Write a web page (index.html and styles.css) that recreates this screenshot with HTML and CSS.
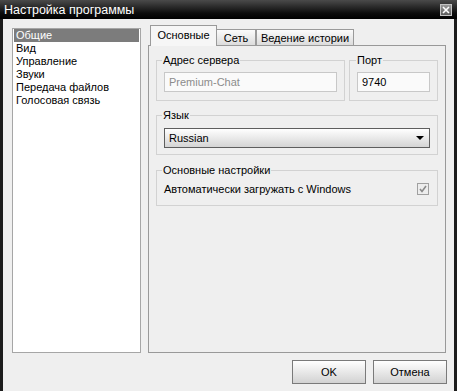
FILE: index.html
```html
<!DOCTYPE html>
<html lang="ru">
<head>
    <meta charset="UTF-8">
    <title>Настройка программы</title>
    <link rel="stylesheet" href="styles.css">
</head>
<body>
    <div class="window">
        <div class="titlebar">
            <span class="title">Настройка программы</span>
            <span class="close">
                <svg width="8" height="8" viewBox="0 0 8 8"><path d="M1 1 L7 7 M7 1 L1 7" stroke="#fff" stroke-width="1.6"/></svg>
            </span>
        </div>
        <div class="frame">
            <div class="main">
                <ul class="nav">
                    <li class="selected">Общие</li>
                    <li>Вид</li>
                    <li>Управление</li>
                    <li>Звуки</li>
                    <li>Передача файлов</li>
                    <li>Голосовая связь</li>
                </ul>
                <div class="tabs">
                    <div class="tabstrip">
                        <div class="tab active">Основные</div>
                        <div class="tab net">Сеть</div>
                        <div class="tab history">Ведение истории</div>
                    </div>
                    <div class="panel">
                        <div class="group-row">
                            <fieldset class="group server">
                                <legend>Адрес сервера</legend>
                                <div class="field disabled">Premium-Chat</div>
                            </fieldset>
                            <fieldset class="group port">
                                <legend>Порт</legend>
                                <div class="field">9740</div>
                            </fieldset>
                        </div>
                        <fieldset class="group lang">
                            <legend>Язык</legend>
                            <div class="select">
                                <span>Russian</span>
                                <svg width="8" height="4" viewBox="0 0 8 4"><path d="M0 0 H8 L4 4 Z" fill="#000"/></svg>
                            </div>
                        </fieldset>
                        <fieldset class="group general">
                            <legend>Основные настройки</legend>
                            <div class="check-row">
                                <span>Автоматически загружать с Windows</span>
                                <span class="checkbox">
                                    <svg width="8" height="8" viewBox="0 0 8 8"><path d="M1 4 L3 6.5 L7 1" fill="none" stroke="#8a8a8a" stroke-width="1.6"/></svg>
                                </span>
                            </div>
                        </fieldset>
                    </div>
                </div>
            </div>
            <div class="buttons">
                <button class="btn">OK</button>
                <button class="btn">Отмена</button>
            </div>
        </div>
    </div>
</body>
</html>
```

FILE: styles.css
```css
body {
    margin: 0;
    background: #000;
    font-family: "Liberation Sans", Arial, sans-serif;
    font-size: 11px;
    color: #000;
}
.window {
    width: 457px;
    height: 391px;
    display: flex;
    flex-direction: column;
}
.titlebar {
    height: 19px;
    display: flex;
    align-items: center;
    justify-content: space-between;
    padding: 0 5px 0 4px;
    background: linear-gradient(#4a4a4a, #0c0c0c 70%, #000);
}
.title {
    color: #fff;
    font-size: 12.5px;
}
.close {
    width: 10px;
    height: 10px;
    border: 1px solid #c4c4c4;
    background: linear-gradient(#9a9a9a, #5c5c5c);
    display: flex;
    align-items: center;
    justify-content: center;
}
.frame {
    flex: 1;
    background: #efefef;
    border-left: 3px solid #1c1c1c;
    border-right: 3px solid #1c1c1c;
}
.main {
    display: flex;
    gap: 7px;
    padding: 6px 8px 0 9px;
}
.nav {
    list-style: none;
    margin: 3px 0 0;
    padding: 0 1px;
    width: 129px;
    height: 325px;
    box-sizing: border-box;
    background: #fff;
    border: 1px solid #a6a6a6;
}
.nav li {
    height: 13px;
    line-height: 13px;
    padding-left: 2px;
}
.nav li.selected {
    background: #7c7c7c;
    color: #fff;
}
.tabs {
    width: 298px;
}
.tabstrip {
    display: flex;
    align-items: flex-end;
    padding-left: 2px;
    height: 20px;
}
.tab {
    box-sizing: border-box;
    height: 16px;
    line-height: 16px;
    border: 1px solid #9a9a9a;
    border-bottom: none;
    background: linear-gradient(#fbfbfb, #dcdcdc);
    text-align: center;
    white-space: nowrap;
}
.tab.active {
    width: 67px;
    height: 21px;
    line-height: 19px;
    margin-bottom: -1px;
    position: relative;
    background: #f6f6f6;
}
.tab.net {
    width: 39px;
    border-left: none;
}
.tab.history {
    width: 98px;
}
.panel {
    box-sizing: border-box;
    height: 308px;
    border: 1px solid #999;
    padding: 7px 7px 0;
}
.group-row {
    display: flex;
    gap: 4px;
}
.group {
    margin: 0;
    padding: 5px 7px 8px;
    border: 1px solid #d2d2d2;
    min-width: 0;
}
.group legend {
    padding: 0 1px;
    margin-left: -2px;
    line-height: 14px;
}
.server {
    flex: 1;
}
.port {
    width: 89px;
    box-sizing: border-box;
}
.port legend {
    margin-left: -1px;
}
.field {
    height: 20px;
    box-sizing: border-box;
    border: 1px solid #c8c8c8;
    background: #fafafa;
    line-height: 18px;
    padding-left: 4px;
}
.field.disabled {
    color: #8c8c8c;
}
.lang {
    margin-top: 7px;
    padding: 6px 7px 6px;
}
.select {
    height: 20px;
    box-sizing: border-box;
    border: 1px solid #5e5e5e;
    background: linear-gradient(#ffffff, #d4d4d4);
    display: flex;
    align-items: center;
    justify-content: space-between;
    padding: 0 5px 0 4px;
}
.general {
    margin-top: 8px;
    padding: 3px 8px 7px 7px;
}
.check-row {
    height: 18px;
    display: flex;
    align-items: center;
    justify-content: space-between;
}
.checkbox {
    width: 10px;
    height: 10px;
    border: 1px solid #a0a0a0;
    background: #ededed;
    display: flex;
    align-items: center;
    justify-content: center;
}
.buttons {
    display: flex;
    justify-content: flex-end;
    gap: 7px;
    padding: 7px 7px 0 0;
}
.btn {
    width: 74px;
    height: 24px;
    border: 1px solid #7a7a7a;
    background: linear-gradient(#ffffff, #d2d2d2);
    font-family: "Liberation Sans", Arial, sans-serif;
    font-size: 11px;
    color: #000;
    padding: 0;
}
```
